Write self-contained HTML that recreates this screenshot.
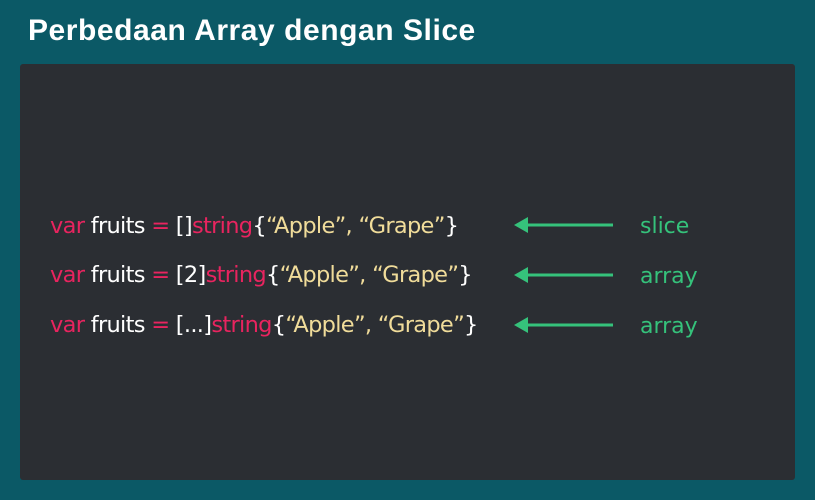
<!DOCTYPE html>
<html><head><style>
body{margin:0;width:815px;height:500px;background:#0b5966;position:relative;overflow:hidden;font-family:"Liberation Sans","DejaVu Sans",sans-serif}
h1{position:absolute;left:28px;top:14px;margin:0;color:#fff;font-size:30px;font-weight:bold;letter-spacing:0.55px}
.panel{position:absolute;left:20px;top:64px;width:775px;height:416px;background:#2b2e33;border-radius:3px}
.l{position:absolute;left:50px;font-size:22.5px;color:#fff;white-space:nowrap;font-family:"DejaVu Sans",sans-serif;letter-spacing:-0.7px}
.k{color:#e8245f}.s{color:#f0dc9a}
.lab{position:absolute;left:640px;font-size:22px;color:#35c27b;font-family:"DejaVu Sans",sans-serif}
svg{position:absolute;left:0;top:0}
</style></head><body>
<h1>Perbedaan Array dengan Slice</h1>
<div class="panel"></div>
<div class="l" style="top:213px"><span class="k">var</span> fruits <span class="k">=</span> []<span class="k">string</span>{<span class="s">“Apple”, “Grape”</span>}</div>
<div class="l" style="top:262px"><span class="k">var</span> fruits <span class="k">=</span> [2]<span class="k">string</span>{<span class="s">“Apple”, “Grape”</span>}</div>
<div class="l" style="top:312px"><span class="k">var</span> fruits <span class="k">=</span> [...]<span class="k">string</span>{<span class="s">“Apple”, “Grape”</span>}</div>
<div class="lab" style="top:214px">slice</div>
<div class="lab" style="top:264px">array</div>
<div class="lab" style="top:314px">array</div>
<svg width="815" height="500">
<g fill="#35c27b" stroke="#35c27b" stroke-width="3">
<line x1="524" y1="225" x2="613" y2="225"/><polygon points="514,225 528,217 528,233" stroke="none"/>
<line x1="524" y1="275" x2="613" y2="275"/><polygon points="514,275 528,267 528,283" stroke="none"/>
<line x1="524" y1="325" x2="613" y2="325"/><polygon points="514,325 528,317 528,333" stroke="none"/>
</g></svg>
</body></html>
